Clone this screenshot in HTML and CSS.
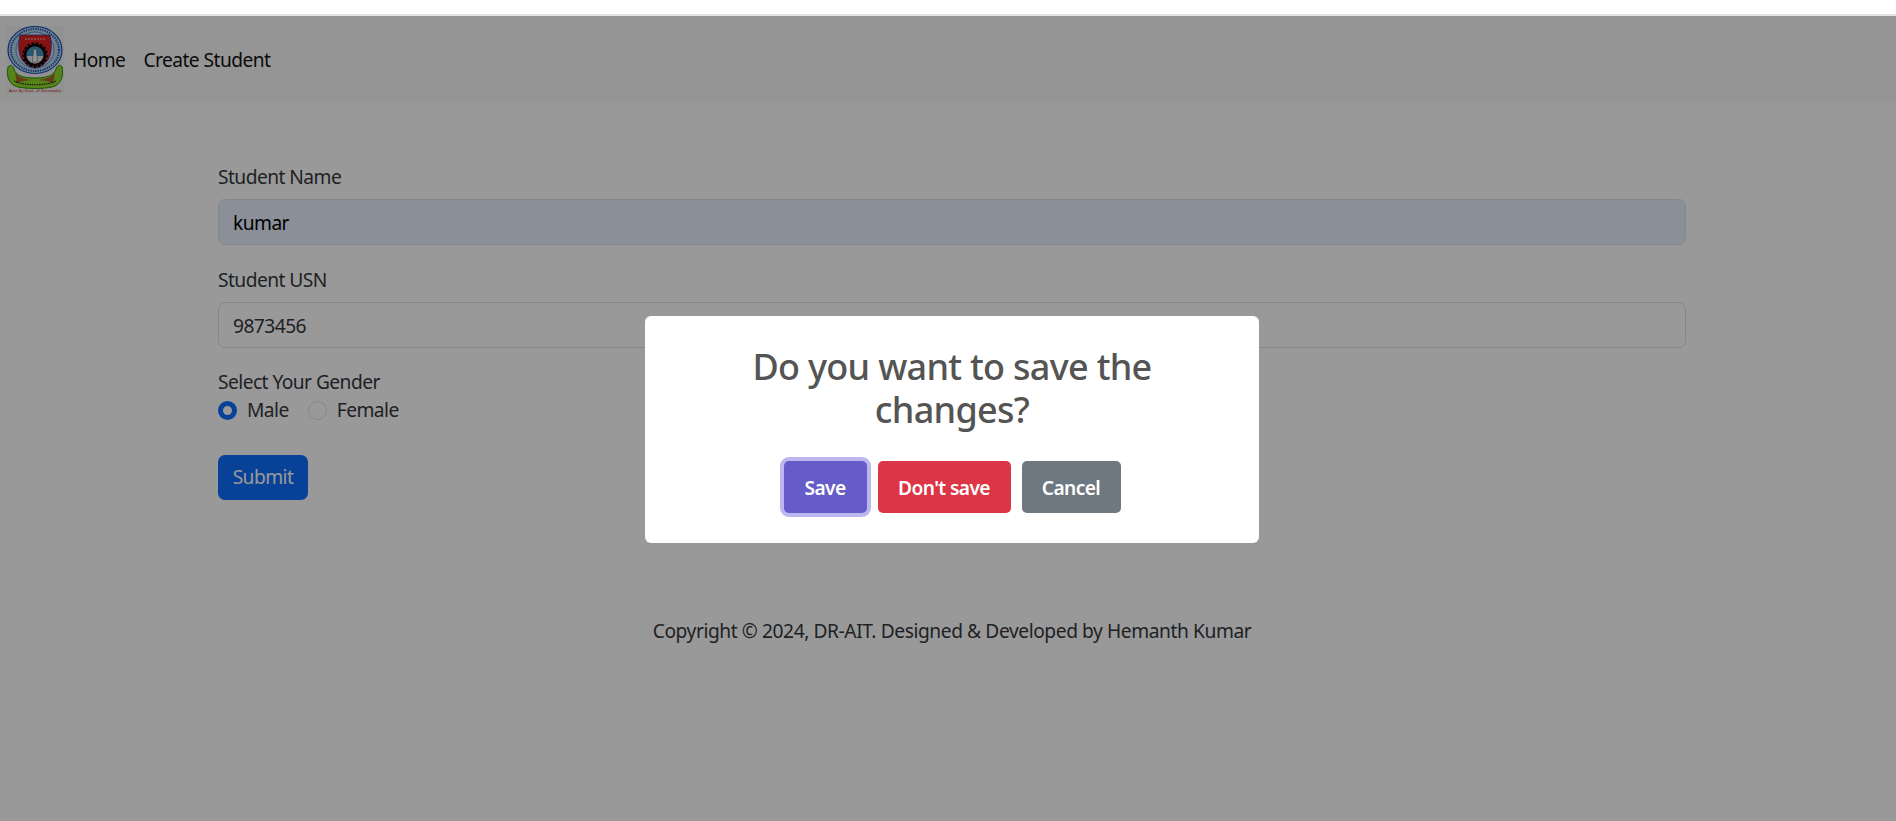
FILE: index.html
```html
<!DOCTYPE html>
<html lang="en">
<head>
    <meta charset="UTF-8">
    <meta name="viewport" content="width=device-width, initial-scale=1.0">
    <title>Create Student</title>
    <link rel="stylesheet" href="styles.css">
</head>
<body>
    <div class="top-strip"></div>
    <nav class="navbar">
        <svg class="logo" width="58" height="68" viewBox="0 0 58 68">
            <rect width="58" height="68" fill="#f2f2f2"/>
            <!-- ribbon -->
            <path d="M2 41 C0 50 3 59 12 61 C22 63 37 63 46 61 C55 59 58 50 56 41 C54 38 51 39 50 43 C48 50 40 52 29 52 C18 52 10 50 8 43 C7 39 4 38 2 41 Z" fill="#8fdc28" stroke="#2f8a10" stroke-width="1"/>
            <path d="M9 47 C15 53 22 54 29 54 C36 54 43 53 49 47 L47 57 C38 53 20 53 11 57 Z" fill="#a8632a"/>
            <path d="M8 55 C18 60 40 60 50 55" fill="none" stroke="#222" stroke-width="1.2" stroke-dasharray="1.5 0.8"/>
            <!-- seal -->
            <ellipse cx="29" cy="24" rx="27" ry="23.5" fill="#b4d6ea" stroke="#1b49c4" stroke-width="1.2"/>
            <ellipse cx="29" cy="24" rx="24" ry="21" fill="none" stroke="#2a55b0" stroke-width="2" stroke-dasharray="1.4 1"/>
            <ellipse cx="29" cy="24" rx="19" ry="18" fill="#d5e6ee" stroke="#3a6fd0" stroke-width="0.8"/>
            <path d="M14 9 H44 C46 18 46 28 42 34 C38 39 34 41 29 42 C24 41 20 39 16 34 C12 28 12 18 14 9 Z" fill="#e02020" stroke="#243f9c" stroke-width="0.8"/>
            <path d="M19 13 H39" stroke="#f3c0b0" stroke-width="1.2" stroke-dasharray="2 1"/>
            <circle cx="29" cy="29" r="11.5" fill="none" stroke="#0d0d0d" stroke-width="2.6" stroke-dasharray="2.6 1.6"/>
            <circle cx="29" cy="29" r="9.8" fill="none" stroke="#0d0d0d" stroke-width="2.6"/>
            <circle cx="29" cy="29" r="8.5" fill="#3f93c4"/>
            <path d="M20.6 30 H37.4 C36.5 34 33 37.5 29 37.5 C25 37.5 21.5 34 20.6 30 Z" fill="#dfe6ea"/>
            <path d="M27.8 23 H30.2 L31.6 36 H26.4 Z" fill="#f6f6f6" stroke="#333" stroke-width="0.4"/>
            <text class="logo-text" x="29" y="66" text-anchor="middle">Accr By Govt. of Karnataka</text>
        </svg>
        <a class="nav-link" href="#">Home</a>
        <a class="nav-link" href="#">Create Student</a>
    </nav>

    <main class="container">
        <form class="student-form">
            <div class="field">
                <label class="form-label" for="name">Student Name</label>
                <input class="form-control autofilled" id="name" type="text" value="kumar">
            </div>
            <div class="field">
                <label class="form-label" for="usn">Student USN</label>
                <input class="form-control" id="usn" type="text" value="9873456">
            </div>
            <div class="gender">
                <div class="gender-title">Select Your Gender</div>
                <div class="radio-row">
                    <label class="radio-label"><input class="radio" type="radio" name="gender" checked> Male</label>
                    <label class="radio-label"><input class="radio" type="radio" name="gender"> Female</label>
                </div>
            </div>
            <button class="btn-submit" type="button">Submit</button>
        </form>
        <footer class="copyright">Copyright © 2024, DR-AIT. Designed &amp; Developed by Hemanth Kumar</footer>
    </main>

    <div class="overlay">
        <div class="dialog">
            <h2 class="dialog-title">Do you want to save the changes?</h2>
            <div class="dialog-actions">
                <button class="dialog-btn btn-save" type="button">Save</button>
                <button class="dialog-btn btn-deny" type="button">Don't save</button>
                <button class="dialog-btn btn-cancel" type="button">Cancel</button>
            </div>
        </div>
    </div>
</body>
</html>
```

FILE: styles.css
```css
* {
    box-sizing: border-box;
}
html, body {
    height: 100%;
    overflow: hidden;
}
body {
    margin: 0;
    background-color: #fff;
    color: #34383c;
    font-family: "Noto Sans", "Open Sans", sans-serif;
    font-size: 19.2px;
    line-height: 1.5;
    letter-spacing: -0.55px;
}
.top-strip {
    height: 16px;
    background: #fff;
    border-bottom: 2px solid #e2e2e2;
}
.navbar {
    height: 87px;
    background-color: #f8f9fa;
    display: flex;
    align-items: center;
    padding-left: 6px;
}
.logo {
    margin-right: 9px;
    flex-shrink: 0;
}
.logo-text {
    font-size: 4.2px;
    letter-spacing: 0;
    fill: #c02010;
}
.nav-link {
    color: #111;
    text-decoration: none;
    margin-right: 18px;
    padding-top: 2px;
}
.container {
    width: 1468px;
    margin-left: 218px;
    padding-top: 58px;
}
.field {
    margin-bottom: 19px;
}
.form-label {
    display: block;
    padding-top: 2px;
    margin-bottom: 7px;
}
.form-control {
    display: block;
    width: 100%;
    height: 46px;
    padding: 2px 14px 0;
    border: 1px solid #dee2e6;
    border-radius: 7px;
    background: #fff;
    color: #34383c;
    font: inherit;
    letter-spacing: inherit;
}
.autofilled {
    background-color: #e8f0fe;
    color: #000;
}
.gender-title {
    padding-top: 1px;
}
.radio-row {
    display: flex;
    gap: 19px;
}
.radio-label {
    display: flex;
    align-items: center;
    gap: 10px;
}
.radio {
    appearance: none;
    width: 19px;
    height: 19px;
    margin: 0;
    border: 1px solid #dee2e6;
    border-radius: 50%;
    background: #fff;
}
.radio:checked {
    border: 5px solid #0d6efd;
}
.btn-submit {
    display: block;
    width: 90px;
    height: 45px;
    margin-top: 30px;
    padding: 0;
    border: 0;
    border-radius: 7px;
    background-color: #0d6efd;
    color: #fff;
    font: inherit;
    letter-spacing: inherit;
}
.copyright {
    margin-top: 117px;
    text-align: center;
    letter-spacing: -0.42px;
}
.overlay {
    position: fixed;
    top: 16px;
    left: 0;
    right: 0;
    bottom: 0;
    background: rgba(0, 0, 0, 0.4);
}
.dialog {
    position: absolute;
    left: 645px;
    top: 300px;
    width: 614px;
    height: 227px;
    padding-top: 29px;
    background: #fff;
    border-radius: 6px;
    text-align: center;
}
.dialog-title {
    margin: 0;
    padding: 0 90px;
    color: #545454;
    font-size: 36px;
    font-weight: 500;
    line-height: 43px;
    letter-spacing: -0.7px;
}
.dialog-actions {
    display: flex;
    justify-content: center;
    gap: 11px;
    margin-top: 30px;
}
.dialog-btn {
    height: 52px;
    padding: 2px 0 0;
    border: 0;
    border-radius: 5px;
    color: #fff;
    font: inherit;
    font-weight: 600;
    letter-spacing: -0.6px;
}
.btn-save {
    width: 83px;
    background-color: #655cc9;
    box-shadow: 0 0 0 4px #bcb7ef;
}
.btn-deny {
    width: 133px;
    background-color: #dc3545;
}
.btn-cancel {
    width: 99px;
    background-color: #6e7881;
}
```
